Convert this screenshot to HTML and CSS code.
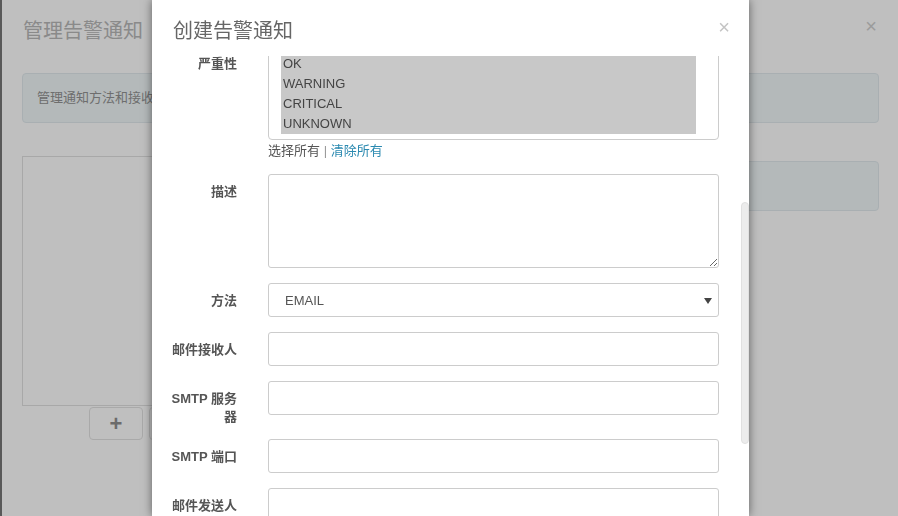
FILE: index.html
```html
<!DOCTYPE html>
<html lang="zh-CN">
<head>
  <meta charset="UTF-8" />
  <title>管理告警通知</title>
  <meta name="viewport" content="width=device-width, initial-scale=1.0" />
  <link rel="stylesheet" href="styles.css">
</head>
<body>
  <div class="page">
    <div class="page-header">
      <h3>管理告警通知</h3>
      <span class="close">×</span>
    </div>
    <div class="alert">管理通知方法和接收人，选择左侧列表中的通知进行编辑。</div>
    <div class="row">
      <div class="col-list">
        <div class="list-box"></div>
        <div class="btn-bar">
          <button class="btn">+</button>
          <button class="btn">−</button>
        </div>
      </div>
      <div class="col-detail">
        <div class="alert">请选择一个通知</div>
      </div>
    </div>
  </div>

  <div class="backdrop"></div>

  <div class="modal">
    <div class="modal-header">
      <h4>创建告警通知</h4>
      <span class="modal-close">×</span>
    </div>
    <div class="modal-body">
      <form class="form">
        <div class="form-group">
          <label>严重性</label>
          <div>
            <div class="listbox">
              <div class="option">OK</div>
              <div class="option">WARNING</div>
              <div class="option">CRITICAL</div>
              <div class="option">UNKNOWN</div>
            </div>
            <div class="help">选择所有 <span class="sep">|</span> <a href="#">清除所有</a></div>
          </div>
        </div>
        <div class="form-group">
          <label>描述</label>
          <textarea class="control textarea"></textarea>
        </div>
        <div class="form-group">
          <label>方法</label>
          <div class="control select">EMAIL<span class="caret"></span></div>
        </div>
        <div class="form-group">
          <label>邮件接收人</label>
          <input class="control" type="text">
        </div>
        <div class="form-group">
          <label>SMTP 服务器</label>
          <input class="control" type="text">
        </div>
        <div class="form-group">
          <label>SMTP 端口</label>
          <input class="control" type="text">
        </div>
        <div class="form-group">
          <label>邮件发送人</label>
          <input class="control" type="text">
        </div>
      </form>
    </div>
    <div class="scroll-thumb"></div>
  </div>
</body>
</html>
```

FILE: styles.css
```css
html, body {
  height: 100%;
}
body {
  margin: 0;
  background: #fff;
  border-left: 2px solid #777;
  font-family: "Liberation Sans", "Noto Sans CJK SC", sans-serif;
  font-size: 13px;
  color: #555;
  overflow: hidden;
}
.page {
  padding: 0 19px 0 20px;
}
.page-header {
  display: flex;
  justify-content: space-between;
  align-items: center;
  height: 60px;
}
.page-header h3 {
  margin: -2px 0 0 1px;
  font-size: 20px;
  font-weight: normal;
  color: #b8b8b8;
}
.close {
  font-size: 20px;
  color: #cfcfcf;
  margin: -8px 2px 0 0;
}
.alert {
  background: #f0f7f9;
  border: 1px solid #e2eaee;
  border-radius: 4px;
  padding: 15px 14px;
  line-height: 18px;
  color: #939393;
  margin-top: 13px;
}
.row {
  display: flex;
  gap: 30px;
  margin-top: 33px;
}
.col-list {
  width: 248px;
}
.list-box {
  height: 248px;
  border: 1px solid #e0e0e0;
}
.btn-bar {
  display: flex;
  justify-content: center;
  gap: 6px;
  margin-top: 1px;
}
.btn {
  width: 54px;
  height: 33px;
  background: #fff;
  border: 1px solid #e2e2e2;
  border-radius: 4px;
  font-family: "Liberation Sans", sans-serif;
  font-size: 22px;
  font-weight: bold;
  color: #8f8f8f;
}
.col-detail {
  flex: 1;
}
.col-detail .alert {
  margin-top: 5px;
}

.backdrop {
  position: fixed;
  inset: 0;
  background: rgba(0, 0, 0, 0.25);
}

.modal {
  position: absolute;
  top: 0;
  left: 152px;
  width: 597px;
  height: 516px;
  background: #fff;
  box-shadow: 0 0 9px rgba(0, 0, 0, 0.5);
  display: flex;
  flex-direction: column;
}
.modal-header {
  height: 56px;
  box-sizing: border-box;
  padding: 17px 19px 0 21px;
  display: flex;
  justify-content: space-between;
}
.modal-header h4 {
  margin: 0;
  font-size: 20px;
  line-height: 28px;
  font-weight: normal;
  color: #666;
}
.modal-close {
  font-size: 20px;
  line-height: 20px;
  color: #c4c4c4;
}
.modal-body {
  flex: 1;
  overflow: hidden;
  padding: 0 30px 0 17px;
}
.form {
  margin-top: -10px;
}
.form-group {
  display: grid;
  grid-template-columns: 68px 1fr;
  column-gap: 31px;
  margin-bottom: 15px;
}
.form-group label {
  padding-top: 9px;
  margin-bottom: -2px;
  line-height: 18px;
  font-weight: bold;
  text-align: right;
  color: #555;
}
.listbox {
  height: 94px;
  box-sizing: border-box;
  border: 1px solid #ccc;
  border-radius: 4px;
  padding: 7px 22px 5px 12px;
}
.option {
  line-height: 20px;
  padding: 0 2px;
  background: #c8c8c8;
  color: #444;
}
.help {
  margin-top: 2px;
  line-height: 17px;
  color: #555;
}
.help .sep {
  color: #999;
}
.help a {
  color: #2a89b0;
  text-decoration: none;
}
.control {
  display: block;
  width: 100%;
  height: 34px;
  box-sizing: border-box;
  border: 1px solid #ccc;
  border-radius: 3px;
  background: #fff;
  font-family: inherit;
  font-size: 13px;
  color: #555;
  margin: 0;
}
.textarea {
  height: 94px;
  resize: vertical;
}
.select {
  display: flex;
  align-items: center;
  justify-content: space-between;
  padding: 1px 6px 0 16px;
}
.caret {
  width: 0;
  height: 0;
  border-left: 4px solid transparent;
  border-right: 4px solid transparent;
  border-top: 6px solid #444;
}
.scroll-thumb {
  position: absolute;
  left: 589px;
  top: 202px;
  width: 6px;
  height: 240px;
  background: #ececec;
  border: 1px solid #e0e0e0;
  border-radius: 4px;
}
```
